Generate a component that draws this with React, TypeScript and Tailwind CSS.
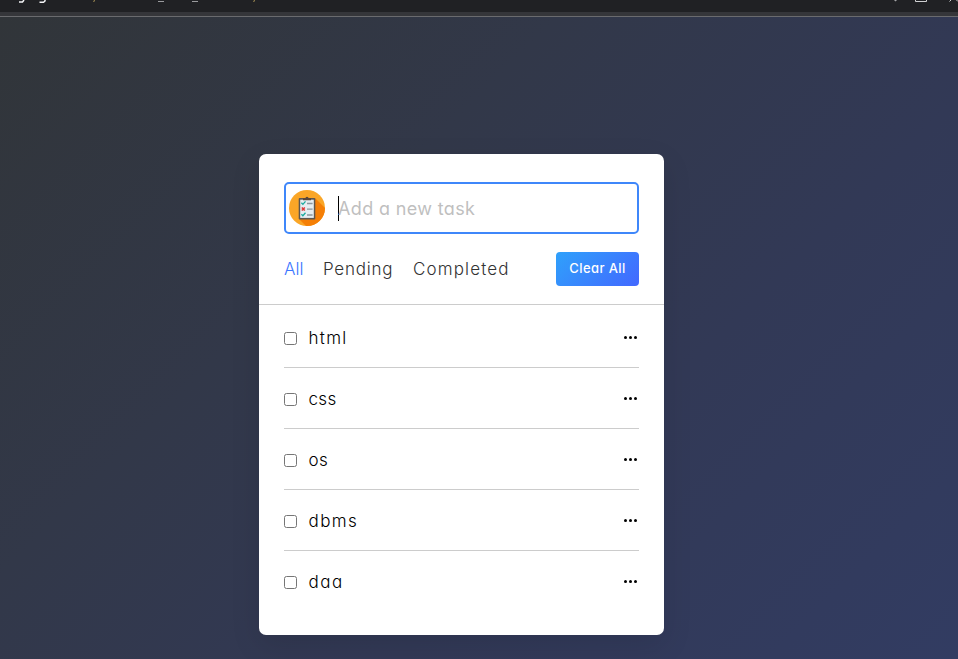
const tasks = [
  { name: 'html', spacing: 'tracking-[1.3px]' },
  { name: 'css', spacing: 'tracking-[0.3px]' },
  { name: 'os', spacing: 'tracking-[0.5px]' },
  { name: 'dbms', spacing: 'tracking-[1.4px]' },
  { name: 'daa', spacing: 'tracking-[1.5px]' },
];

function ClipboardIcon() {
  return (
    <svg width="36" height="36" viewBox="0 0 36 36" className="ml-[3px] shrink-0">
      <defs>
        <clipPath id="disc">
          <circle cx="18" cy="18" r="18" />
        </clipPath>
      </defs>
      <circle cx="18" cy="18" r="18" fill="#faa627" />
      <path d="M26 8L37 19V37H18L10 29Z" fill="#f57f06" clipPath="url(#disc)" />
      <rect x="9.7" y="8" width="16.6" height="21.4" rx="1" fill="#5d564f" />
      <rect x="11.2" y="9.7" width="13.6" height="18.2" fill="#e6edf1" />
      <path d="M14 8.3h2.4a1.6 1.6 0 0 1 3.2 0H22v2h-8z" fill="#5a4638" />
      <path d="M12.4 12.8l1.5 1.6 2.6-3M12.4 24.2l1.5 1.6 2.6-3" fill="none" stroke="#19a99e" strokeWidth="1.3" />
      <path d="M12.8 17.5l3 3m0-3l-3 3" stroke="#df3535" strokeWidth="1.5" />
      <path d="M18 13.5h5.6M18 19.2h5.6M18 25h5.6" stroke="#8b959c" strokeWidth="1.3" />
    </svg>
  );
}

function BrowserEdge() {
  return (
    <header className="relative h-[17px] overflow-hidden border-b border-[#6a6b6e] bg-[#35363a]">
      <div className="h-3 bg-[#202124]" />
      <svg width="958" height="12" className="absolute left-0 top-0" fill="none">
        <path d="M24 0l-1.5 2H19M45 0v1l-1.5 1.3H39.5" stroke="#f4f5f7" strokeWidth="1.5" />
        <path d="M94.5 0l-.8 2M254.5 0l-.8 2" stroke="#a69155" />
        <path d="M158 1.5h6M192 1.5h6" stroke="#9a9b9e" />
        <path d="M894 0h3l-1.5 1.5z" fill="#a4a5a7" />
        <path d="M915.5 0v1.5h11V0" stroke="#d0d1d3" />
        <path d="M951 0l-1.5 1.5M956.5 0l1.5 1.5" stroke="#d0d1d3" />
      </svg>
    </header>
  );
}

export default function App() {
  return (
    <div className="flex h-[659px] w-[958px] flex-col overflow-hidden bg-[#323639] font-[Inter,'Noto_Sans',sans-serif] [font-feature-settings:'cv11'_1]">
      <BrowserEdge />
      <main className="flex-1 bg-[linear-gradient(135deg,#313539_0%,#323849_35%,#323956_65%,#323c62_100%)] pt-[137px]">
        <section className="ml-[259px] h-[481px] w-[405px] rounded-[7px] bg-white pt-7 shadow-[0_10px_30px_rgba(0,0,0,0.1)]">
          <div className="mx-[25px] flex h-[52px] items-center rounded-[5px] border-2 border-[#3f87fa]">
            <ClipboardIcon />
            <div className="ml-[13px] mt-px h-[25px] w-px bg-black" />
            <span className="-ml-px whitespace-nowrap text-[18px] font-normal tracking-[0.35px] text-[#bfbfbf]">Add a new task</span>
          </div>
          <div className="flex h-[71px] items-center border-b border-[#ccc] px-[25px] text-[17px] font-light text-[#333]">
            <span className="w-[39px] whitespace-nowrap pt-0.5 text-[#3c76ff]">All</span>
            <span className="w-[90px] whitespace-nowrap pt-0.5 tracking-[0.75px]">Pending</span>
            <span className="w-[143px] whitespace-nowrap pt-0.5 tracking-[1.15px]">Completed</span>
            <button className="h-[34px] w-[83px] whitespace-nowrap rounded bg-[linear-gradient(135deg,#2fa1fb,#4368ff)] text-[13px] font-medium tracking-[0.4px] text-white">Clear All</button>
          </div>
          <ul className="mx-[25px] mt-0.5">
            {tasks.map((task) => (
              <li key={task.name} className="flex h-[61px] items-center border-b border-[#ccc] pt-1 last:border-transparent">
                <span className="mb-[2px] h-[13px] w-[13px] rounded-[2.5px] border border-[#767676] bg-white" />
                <span className={`ml-[11.5px] text-[17px] font-light text-black ${task.spacing}`}>{task.name}</span>
                <span className="mb-1 ml-auto mr-[2px] flex gap-[2px]">
                  <i className="h-[3px] w-[3px] rounded-full bg-black" />
                  <i className="h-[3px] w-[3px] rounded-full bg-black" />
                  <i className="h-[3px] w-[3px] rounded-full bg-black" />
                </span>
              </li>
            ))}
          </ul>
        </section>
      </main>
    </div>
  );
}
